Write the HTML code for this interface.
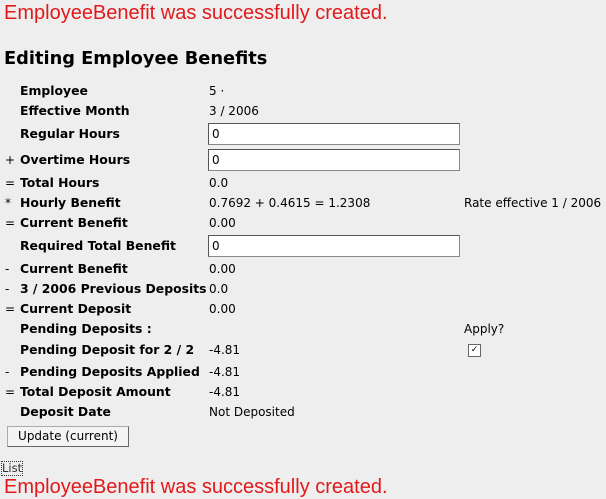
<!DOCTYPE html>
<html><head><meta charset="utf-8"><style>
body{margin:0;width:606px;height:499px;background:#eeeeee;position:relative;overflow:hidden;font-family:"DejaVu Sans","Liberation Sans",sans-serif;font-size:12px;color:#000}
.a{position:absolute;white-space:nowrap;line-height:14px}
.red{position:absolute;left:4px;color:#e2191b;font-family:"Liberation Sans",sans-serif;font-size:20px;line-height:22px;white-space:nowrap}
.l{font-weight:bold;left:20px;font-size:12.4px}
.p{left:5px}
.v{left:209px}
.in{position:absolute;left:208px;width:247px;height:20px;background:#fff;border:1px solid #888;border-top-color:#555;border-left-color:#555;font-size:12px;line-height:20px;padding-left:3px;box-sizing:content-box}
</style></head><body>
<div class="red" style="top:2px">EmployeeBenefit was successfully created.</div>
<div class="a" style="left:4px;top:48px;font-size:17.8px;font-weight:bold;line-height:22px">Editing Employee Benefits</div>

<div class="a l" style="top:84px">Employee</div><div class="a v" style="top:84px">5 ·</div>
<div class="a l" style="top:104px">Effective Month</div><div class="a v" style="top:104px">3 / 2006</div>
<div class="a l" style="top:127px">Regular Hours</div><div class="in" style="top:123px">0</div>
<div class="a p" style="top:153px">+</div><div class="a l" style="top:153px">Overtime Hours</div><div class="in" style="top:149px">0</div>
<div class="a p" style="top:176px">=</div><div class="a l" style="top:176px">Total Hours</div><div class="a v" style="top:176px">0.0</div>
<div class="a p" style="top:196px">*</div><div class="a l" style="top:196px">Hourly Benefit</div><div class="a v" style="top:196px">0.7692 + 0.4615 = 1.2308</div><div class="a" style="left:464px;top:196px">Rate effective 1 / 2006</div>
<div class="a p" style="top:216px">=</div><div class="a l" style="top:216px">Current Benefit</div><div class="a v" style="top:216px">0.00</div>
<div class="a l" style="top:239px">Required Total Benefit</div><div class="in" style="top:235px">0</div>
<div class="a p" style="top:262px">-</div><div class="a l" style="top:262px">Current Benefit</div><div class="a v" style="top:262px">0.00</div>
<div class="a p" style="top:282px">-</div><div class="a l" style="top:282px">3 / 2006 Previous Deposits</div><div class="a v" style="top:282px">0.0</div>
<div class="a p" style="top:302px">=</div><div class="a l" style="top:302px">Current Deposit</div><div class="a v" style="top:302px">0.00</div>
<div class="a l" style="top:322px">Pending Deposits :</div><div class="a" style="left:464px;top:322px">Apply?</div>
<div class="a l" style="top:343px">Pending Deposit for 2 / 2</div><div class="a v" style="top:343px">-4.81</div>
<div style="position:absolute;left:468px;top:344px;width:11px;height:11px;background:#fff;border:1px solid #666;font-size:9px;line-height:11px;text-align:center">✓</div>
<div class="a p" style="top:365px">-</div><div class="a l" style="top:365px">Pending Deposits Applied</div><div class="a v" style="top:365px">-4.81</div>
<div class="a p" style="top:385px">=</div><div class="a l" style="top:385px">Total Deposit Amount</div><div class="a v" style="top:385px">-4.81</div>
<div class="a l" style="top:405px">Deposit Date</div><div class="a v" style="top:405px">Not Deposited</div>
<div style="position:absolute;left:7px;top:426px;width:120px;height:19px;background:#f4f4f4;border:1px solid #aaa;border-right-color:#666;border-bottom-color:#666;font-size:12px;line-height:19px;text-align:center">Update (current)</div>
<div class="a" style="left:2px;top:462px;font-size:11.5px;color:#333;outline:1px dotted #333;line-height:13px">List</div>
<div class="red" style="top:476px">EmployeeBenefit was successfully created.</div>
</body></html>
